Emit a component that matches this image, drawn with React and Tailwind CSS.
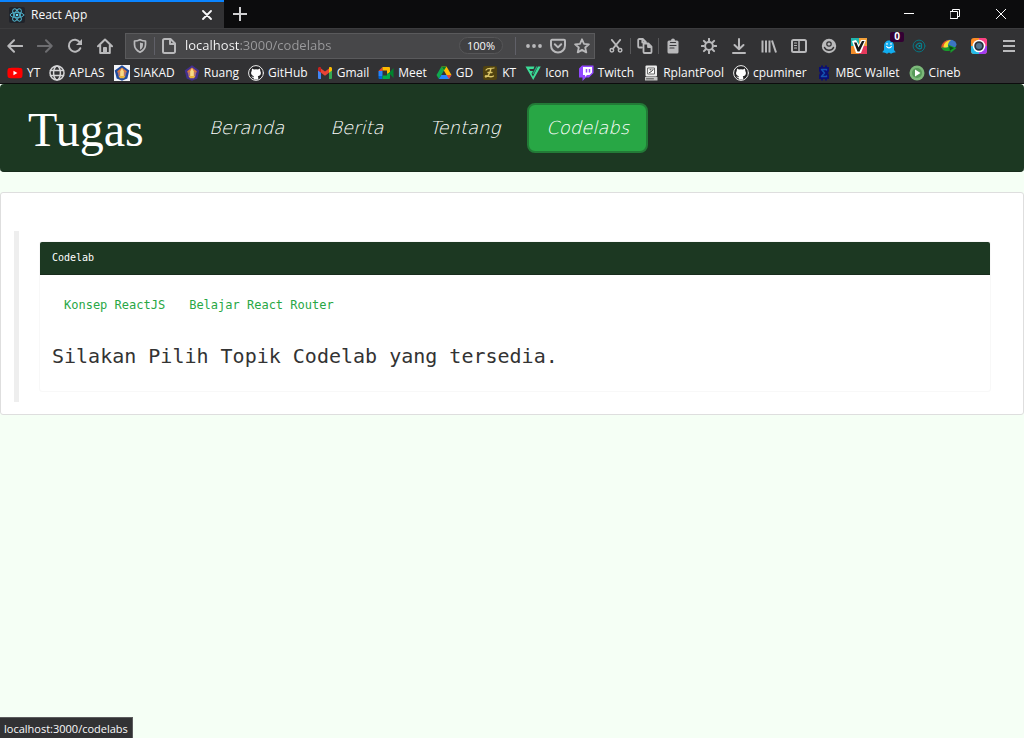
import React from "react";
import { FaGithub, FaYoutube } from "react-icons/fa";

const ui = "font-['Open_Sans','Noto_Sans',sans-serif]";

function Svg({ children, size = 16, box = 16, className = "" }) {
  return (
    <svg
      width={size}
      height={size}
      viewBox={`0 0 ${box} ${box}`}
      fill="none"
      stroke="currentColor"
      strokeWidth="2"
      strokeLinecap="round"
      strokeLinejoin="round"
      className={`shrink-0 ${className}`}
      aria-hidden="true"
    >
      {children}
    </svg>
  );
}

const ReactLogo = () => (
  <Svg>
    <rect width="16" height="16" rx="2" fill="#20232a" stroke="none" />
    <g stroke="#4fb3cc" strokeWidth="1">
      <ellipse cx="8" cy="8" rx="6.8" ry="2.7" />
      <ellipse cx="8" cy="8" rx="6.8" ry="2.7" transform="rotate(60 8 8)" />
      <ellipse cx="8" cy="8" rx="6.8" ry="2.7" transform="rotate(120 8 8)" />
    </g>
    <circle cx="8" cy="8" r="1.3" fill="#61dafb" stroke="none" />
  </Svg>
);

const Back = () => <Svg><path d="M15.200 8H1.500M7 2.300L1.300 8L7 13.700" /></Svg>;
const Forward = () => <Svg><path d="M.8 8h13.700M9 2.300L14.700 8L9 13.700" /></Svg>;
const Reload = () => (
  <Svg>
    <path d="M13.300 10.200A6 6 0 1 1 12.800 4.200" />
    <path d="M15 1v6H9z" fill="currentColor" stroke="none" />
  </Svg>
);
const Home = () => (
  <Svg>
    <path d="M1 8.200L8 1.500L15 8.200M3.200 7.500V15h9.600V7.500" />
    <path d="M6.500 14.500V9.500h3v5z" fill="currentColor" strokeWidth="1" />
  </Svg>
);
const Shield = () => (
  <Svg>
    <path d="M8 1.700C6 2.700 4.300 3 2.500 3v3.600C2.500 10.500 4.800 12.800 8 14.300c3.200-1.500 5.500-3.800 5.500-7.700V3c-1.800 0-3.500-.3-5.500-1.300z" strokeWidth="1.700" />
    <path d="M8 4.600v7.200c2-1.200 3-3 3-5.400V5.200c-1 0-2-.2-3-.6z" fill="currentColor" stroke="none" />
  </Svg>
);
const Page = () => (
  <Svg>
    <path d="M3.500 1h6L14 5.500V13.500a1.500 1.500 0 0 1-1.500 1.500h-9A1.500 1.500 0 0 1 2 13.500v-11A1.500 1.500 0 0 1 3.500 1zM9 1.500V6h4.500" />
  </Svg>
);
const Dots = () => (
  <Svg>
    <g fill="currentColor" stroke="none">
      <circle cx="2" cy="8" r="1.900" /><circle cx="8" cy="8" r="1.900" /><circle cx="14" cy="8" r="1.900" />
    </g>
  </Svg>
);
const Pocket = () => (
  <Svg><path d="M2 1.800h12a1 1 0 0 1 1 1V7.500a7 7 0 0 1-14 0V2.800a1 1 0 0 1 1-1zM4.800 6.300L8 9.400l3.200-3.100" /></Svg>
);
const Star = () => (
  <Svg><path d="M8 1.300l2 4.500 4.900.5-3.700 3.200 1.100 4.900L8 11.900l-4.300 2.500 1.100-4.900L1.100 6.300 6 5.800z" strokeWidth="1.800" /></Svg>
);
const Cut = () => (
  <Svg size={14}>
    <circle cx="3.300" cy="12.800" r="2" strokeWidth="1.700" /><circle cx="12.700" cy="12.800" r="2" strokeWidth="1.700" />
    <path d="M4.600 11L12.800 1M11.400 11L3.200 1" />
  </Svg>
);
const Copy = () => (
  <Svg>
    <path d="M5 9.500H2.200a1 1 0 0 1-1-1V2a1 1 0 0 1 1-1h3.600L9 4.200M5.300 1.500v3h2.500" strokeWidth="1.800" />
    <path d="M7.500 5.500h3.800l3.200 3.200V14a1 1 0 0 1-1 1h-6a1 1 0 0 1-1-1V6.500a1 1 0 0 1 1-1zM11 6v3h3" strokeWidth="1.800" />
  </Svg>
);
const Paste = () => (
  <Svg>
    <path d="M4 2.500h2a2 2 0 0 1 4 0h2A1.500 1.500 0 0 1 13.500 4v10a1.500 1.500 0 0 1-1.500 1.500H4A1.500 1.500 0 0 1 2.500 14V4A1.500 1.500 0 0 1 4 2.500z" fill="currentColor" stroke="none" />
    <path d="M5.500 4.500h5M5 7.500h6M5 10h4" stroke="#38383b" strokeWidth="1.200" />
  </Svg>
);
const Gear = () => (
  <Svg>
    <circle cx="8" cy="8" r="3.900" />
    <path d="M8 .8v2M8 13.200v2M.8 8h2M13.200 8h2M2.900 2.900l1.400 1.400M11.700 11.700l1.400 1.400M2.900 13.100l1.400-1.400M11.700 4.300l1.400-1.400" />
  </Svg>
);
const Download = () => <Svg><path d="M8 1v10M3.500 7L8 11.300L12.500 7M2 15h12" /></Svg>;
const Library = () => <Svg><path d="M1.500 2.500v12M5 2.500v12M8.500 2.500v12M11 2.500l4 12" strokeLinecap="butt" /></Svg>;
const Sidebar = () => (
  <Svg>
    <rect x="1" y="2" width="14" height="12" rx="1.500" />
    <path d="M8 2v12" strokeWidth="1.500" /><path d="M3.500 5h2M3.500 7.500h2M3.500 10h2" strokeWidth="1.200" />
  </Svg>
);
const Account = () => (
  <Svg>
    <circle cx="8" cy="8" r="7.200" fill="currentColor" stroke="none" />
    <circle cx="8" cy="6" r="2.800" fill="#323234" stroke="none" /><circle cx="8" cy="6" r="1.600" fill="currentColor" stroke="none" />
    <path d="M3.500 9.500c1.800 3.800 7.200 3.800 9 0" stroke="#323234" strokeWidth="1.500" />
  </Svg>
);
const VLogo = () => (
  <Svg>
    <g stroke="none">
      <path d="M0 0h8v8H0z" fill="#1fb5ad" /><path d="M8 0h8v8H8z" fill="#f2a03a" />
      <path d="M0 8h8v8H0z" fill="#f28c28" /><path d="M8 8h8v8H8z" fill="#e5395c" />
      <path d="M1 3l4-1 3 5 2-5h5L10 15H5z" fill="#fff" />
      <path d="M3 4.500h2.500l2 5L11 3h2.500L8.500 13.500h-2z" fill="#181818" />
    </g>
  </Svg>
);
const Ghost = () => (
  <Svg>
    <path d="M3 8C3 .5 13 .5 13 8v4l1.800 2.200-2.800.6-2 .9L8 14.500l-2 1.200-2-.9-2.800-.6L3 12z" fill="#12adf0" stroke="none" />
    <path d="M6 5.300v1M10 5.300v1M5.700 8.500c1 1.800 3.600 1.800 4.600 0" stroke="#fff" strokeWidth="1.200" />
  </Svg>
);
const Target = () => (
  <Svg>
    <circle cx="8" cy="8" r="5.900" stroke="#087481" strokeWidth="1" />
    <path d="M4.800 8C6.500 5 9 4.500 10.500 6v4C9 11.500 6.500 11 4.800 8z" stroke="#087f8c" strokeWidth="1.200" />
    <circle cx="8.500" cy="8" r="1" fill="#0d96a4" stroke="none" />
  </Svg>
);
const Idm = () => (
  <Svg>
    <g stroke="none">
      <ellipse cx="9" cy="6.500" rx="6.500" ry="4.700" fill="#3b75c4" />
      <path d="M.3 10C0 5 5 1.500 9.500 2 6 4 5 6 5 9.500z" fill="#e0522a" />
      <path d="M2.500 9.500C2.500 5 6 2.500 10 2 7.500 4 6.500 6 7 9.500z" fill="#f5e12f" />
      <path d="M.5 8.500C2 10.500 5 10 7.500 9L7 6.500l8.500 3.500-6 5v-2.500C5 14 .5 12.500.5 8.500z" fill="#189a2c" />
      <path d="M8 8l5 2-4 2.500z" fill="#0a4d18" />
    </g>
  </Svg>
);
const Camera = () => (
  <Svg>
    <g stroke="none">
      <rect width="16" height="16" rx="3" fill="#fc8b24" />
      <path d="M8 0h5a3 3 0 0 1 3 3v5H8z" fill="#fb3f86" /><path d="M8 8h8v5a3 3 0 0 1-3 3H8z" fill="#a23bf0" />
      <path d="M0 8h8v8H3a3 3 0 0 1-3-3z" fill="#24bce8" />
      <circle cx="8" cy="8" r="6.300" fill="#fff" />
    </g>
    <circle cx="8" cy="8" r="3.900" fill="#56758d" stroke="#28323f" strokeWidth="1.800" />
  </Svg>
);
const Menu = () => <Svg><path d="M2 3h12M2 8h12M2 13h12" strokeLinecap="butt" /></Svg>;

const Globe = () => (
  <Svg>
    <g strokeWidth="1.500" stroke="#d5d5d7">
      <circle cx="8" cy="8" r="7" /><ellipse cx="8" cy="8" rx="3.400" ry="7" /><path d="M1.500 5.500h13M1.500 10.500h13" />
    </g>
  </Svg>
);
const Crest = ({ boxed }) => (
  <Svg>
    <g stroke="none">
      {boxed && <path d="M0 0h16v16H0z" fill="#f4f4f8" />}
      <path d="M8 .3l7.300 5.200-2 8L8 15.700 2.700 13.500.7 5.500z" fill={boxed ? "#1f4b9e" : "#43308f"} />
      <path d="M8 2.500l4.800 3.700-1.800 5H5l-1.800-5z" fill="#dc7a3c" />
      <path d="M8 3l1.800 3.500V11H6.200V6.500z" fill="#f7dc86" />
      <path d="M4.500 11h7L10 13.200H6z" fill="#e8b33c" />
    </g>
    <path d="M5 7.500v3M11 7.500v3" stroke="#8b6fa8" strokeWidth="1" />
  </Svg>
);
const GitHubMark = () => (
  <Svg>
    <circle cx="8" cy="8" r="7.400" fill="#232325" stroke="#eee" strokeWidth="1" />
    <path d="M4 3.500l2 .9a8 8 0 0 1 4 0l2-.9.300 2.500c1.500 2.500.2 5-2.500 5.300.4.500.5 1 .5 3.200H5.700v-1.800c-1.500.3-2-.5-2.600-1.500 1 .2 1.400 1 2.600.5 0-.2.200-.3.400-.5C3.500 10.800 2.200 8.500 3.700 6z" fill="#fff" stroke="none" />
  </Svg>
);
const Gmail = () => (
  <Svg>
    <g stroke="none">
      <path d="M1 4l3 2.200V14H2a1 1 0 0 1-1-1z" fill="#4285f4" /><path d="M15 4l-3 2.200V14h2a1 1 0 0 0 1-1z" fill="#34a853" />
      <path d="M4 3.500l4 3 4-3v4.200l-4 3-4-3z" fill="#ea4335" />
      <path d="M1 3.500C1 2 2.800 1.600 4 2.500v5.200L1 5.500z" fill="#c5221f" /><path d="M15 3.500c0-1.500-1.800-1.900-3-1v5.200l3-2.200z" fill="#fbbc04" />
    </g>
  </Svg>
);
const Meet = () => (
  <Svg>
    <g stroke="none">
      <path d="M.5 6l4-4v4z" fill="#ea4335" /><path d="M.5 6h4v5h-4z" fill="#2684fc" /><path d="M.5 11h4v3h-3a1 1 0 0 1-1-1z" fill="#0066da" />
      <path d="M4.500 2H11a1 1 0 0 1 1 1v4.500L9 9V5.500H4.500z" fill="#ffba00" />
      <path d="M4.500 10.500H9V9l3-1.500V13a1 1 0 0 1-1 1H4.500z" fill="#00ac47" /><path d="M11 8l4.500-5v10z" fill="#00832d" />
    </g>
  </Svg>
);
const Drive = () => (
  <Svg>
    <g stroke="none">
      <path d="M5.500 1.500L.5 10l2.300 4L8 5.500z" fill="#0fa84e" /><path d="M5.500 1.500h5l5 8.500h-5z" fill="#ffba00" />
      <path d="M5.400 10h10.100L13 14H2.800z" fill="#2684fc" /><path d="M5.500 1.500h5L8 5.600z" fill="#00832d" />
      <path d="M10.500 10h5L13 14z" fill="#ea4335" />
    </g>
  </Svg>
);
const Kt = () => (
  <Svg>
    <rect x="1" y="1" width="14" height="14" rx="2" fill="#51430f" stroke="none" />
    <path d="M4 5c1.500-2.500 5-1 8-2M9 3.500C8 8 7 11 4 12c-1 0-1-1.500.5-1.200 2 .4 4 2 7 .2M6 7.500h4" stroke="#dbc668" strokeWidth="1.300" />
  </Svg>
);
const IconMark = () => (
  <Svg>
    <path d="M.5 1.500h9L8.500 4H4.200l1 2H8L6.800 8.500h-.5L8 11.500 13 1.500h2.800L8.200 15z" fill="#3ddc97" stroke="none" />
    <path d="M12 1.500L8 9" stroke="#23a377" strokeWidth="1.500" strokeLinecap="butt" />
  </Svg>
);
const TwitchMark = () => (
  <Svg>
    <path d="M4 .5L1 3.500v9h3.500V16L8 12.500h3L15.500 8V.5z" fill="#9147ff" stroke="none" />
    <path d="M5 2h9v5.500L11.500 10H9l-2 2v-2H5z" fill="#fff" stroke="none" />
    <path d="M8.500 4v3.500M11.500 4v3.500" stroke="#9147ff" strokeWidth="1.500" strokeLinecap="butt" />
  </Svg>
);
const Pool = () => (
  <Svg>
    <rect x="2.500" y=".5" width="11.500" height="11" rx="1" fill="#ececec" stroke="none" />
    <path d="M5 3h6.500v6H5z" fill="#fff" stroke="#666" strokeWidth="1" /><path d="M6.500 7.500l2-1 1.500-2M7 4.800h1" stroke="#333" strokeWidth="1" />
    <path d="M2 12h12.500v3.500H2z" fill="#c4c4c4" stroke="none" /><path d="M3.500 13.800h7" stroke="#555" strokeWidth="1" />
  </Svg>
);
const Mbc = () => (
  <Svg>
    <path d="M3 2h2V.5h2V2h2V.5h2V2h2v4l-1 2 1 2v4h-2v1.500H9V14H7v1.500H5V14H3v-4l1-2-1-2z" fill="#0c0f72" stroke="none" />
    <path d="M10.500 5V4.500h-5L8.500 8l-3 3.500h5V11" stroke="#1453b0" strokeWidth="1.500" />
  </Svg>
);
const Play = () => (
  <Svg>
    <circle cx="8" cy="8" r="7.500" fill="#7cb97a" stroke="none" /><circle cx="8" cy="8" r="5" fill="#569a59" stroke="none" />
    <path d="M6 4.500L11.500 8 6 11.500z" fill="#fff" stroke="none" />
  </Svg>
);

const bookmarks = [
  ["YT", <FaYoutube size={16} color="#ff0000" className="bg-[radial-gradient(circle,#fff_30%,transparent_32%)]" />],
  ["APLAS", <Globe />],
  ["SIAKAD", <Crest boxed />],
  ["Ruang", <Crest />],
  ["GitHub", <GitHubMark />],
  ["Gmail", <Gmail />],
  ["Meet", <Meet />],
  ["GD", <Drive />],
  ["KT", <Kt />],
  ["Icon", <IconMark />],
  ["Twitch", <TwitchMark />],
  ["RplantPool", <Pool />],
  ["cpuminer", <GitHubMark />],
  ["MBC Wallet", <Mbc />],
  ["Cineb", <Play />],
];

const extensions = [
  ["Settings", <Gear />],
  ["Downloads", <Download />],
  ["Library", <Library />],
  ["Sidebars", <Sidebar />],
  ["Account", <Account />],
  ["V extension", <VLogo />],
  ["Tracker blocker", <Ghost />, "0"],
  ["Target", <Target />],
  ["Download manager", <Idm />],
  ["Screen capture", <Camera />],
  ["Menu", <Menu />],
];

function ToolButton({ label, children, className = "w-[30px]" }) {
  return (
    <button type="button" aria-label={label} className={`relative flex h-7 shrink-0 items-center justify-center ${className}`}>
      {children}
    </button>
  );
}

function TabStrip() {
  return (
    <div className="flex h-7 items-stretch justify-between bg-[#0c0c0d]">
      <div className="flex">
        <div className="flex w-56 items-center gap-1.5 border-t-2 border-[#0a84ff] bg-[#323234] pr-2.5 pl-[9px]">
          <ReactLogo />
          <span className="grow text-[12px] text-[#f9f9fa]">React App</span>
          <button type="button" aria-label="Close tab" className="p-0.5 text-[#f9f9fa]">
            <Svg size={10} box={10}><path d="M1 1l8 8M9 1L1 9" strokeWidth="1.800" /></Svg>
          </button>
        </div>
        <button type="button" aria-label="New tab" className="flex w-8 items-center justify-center text-[#d0d0d2]">
          <Svg size={14} box={14}><path d="M7 0v14M0 7h14" strokeLinecap="butt" /></Svg>
        </button>
      </div>
      <div className="flex text-white">
        <button type="button" aria-label="Minimize" className="flex w-[46px] items-center justify-center">
          <Svg size={10} box={10}><path d="M0 4.500h10" strokeWidth="1" /></Svg>
        </button>
        <button type="button" aria-label="Restore" className="flex w-[46px] items-center justify-center">
          <Svg size={10} box={10}><path d="M.5 2.500h7v7h-7zM2.500 2.500v-2h7v7h-2" strokeWidth="1" /></Svg>
        </button>
        <button type="button" aria-label="Close window" className="flex w-[46px] items-center justify-center">
          <Svg size={10} box={10}><path d="M0 0l10 10M10 0L0 10" strokeWidth="1" /></Svg>
        </button>
      </div>
    </div>
  );
}

function Toolbar() {
  return (
    <div className="flex h-[34px] items-center border-t border-[#3c3c3e] text-[#b9b9bb]">
      <ToolButton label="Back"><Back /></ToolButton>
      <ToolButton label="Forward" className="w-[30px] text-[#6d6d70]"><Forward /></ToolButton>
      <ToolButton label="Reload"><Reload /></ToolButton>
      <ToolButton label="Home"><Home /></ToolButton>
      <div className="ml-[5px] flex h-[26px] min-w-0 grow items-center border border-[#5a5a5c] bg-[#474749] pr-1 pl-1.5">
        <Shield />
        <span className="mx-1.5 h-[18px] w-px bg-[#606068]" />
        <Page />
        <input
          aria-label="Address"
          defaultValue="localhost:3000/codelabs"
          className="ml-2 min-w-0 grow bg-[linear-gradient(to_right,#f9f9fa_55px,#9b9b9d_55px)] bg-clip-text text-[13px] text-transparent outline-none"
        />
        <button type="button" className="h-[17px] w-11 rounded-full border border-[#565658] bg-[#404042] text-[11px] leading-[15px] text-[#f9f9fa]">100%</button>
        <span className="mr-2.5 ml-3 h-[18px] w-px bg-[#606068]" />
        <div className="flex gap-2">
          <button type="button" aria-label="Page actions"><Dots /></button>
          <button type="button" aria-label="Save to Pocket"><Pocket /></button>
          <button type="button" aria-label="Bookmark this page"><Star /></button>
        </div>
      </div>
      <div className="mr-2 ml-[7px] flex items-center">
        <ToolButton label="Cut" className="w-7"><Cut /></ToolButton>
        <span className="h-4 w-px bg-[#58585a]" />
        <ToolButton label="Copy" className="w-[27px]"><Copy /></ToolButton>
        <span className="h-4 w-px bg-[#58585a]" />
        <ToolButton label="Paste" className="w-[27px]"><Paste /></ToolButton>
      </div>
      {extensions.map(([label, icon, badge]) => (
        <ToolButton key={label} label={label}>
          {icon}
          {badge && (
            <span className="absolute top-0 right-0 flex h-2.5 w-3.5 items-center justify-center rounded-xs bg-[#330033] text-[10px] font-bold text-white">{badge}</span>
          )}
        </ToolButton>
      ))}
    </div>
  );
}

function Bookmarks() {
  return (
    <div className="flex h-[22px] items-center gap-[9px] overflow-hidden border-b border-[#0c0c0d] pl-[7px]">
      {bookmarks.map(([label, icon]) => (
        <a key={label} href="#" className="flex shrink-0 items-center gap-1 text-[12px] leading-4 whitespace-nowrap text-[#f9f9fa]">
          {icon}
          {label}
        </a>
      ))}
    </div>
  );
}

function SiteNav() {
  const links = ["Beranda", "Berita", "Tentang", "Codelabs"];
  return (
    <nav className="flex h-22 items-center rounded-[4px] border-b border-[#182c1c] bg-[#1c3822] pl-7 text-white">
      <a href="#" className="w-[162px] pt-1 font-['Liberation_Serif',serif] text-[48px] leading-[56px]">Tugas</a>
      <ul className="flex gap-2">
        {links.map((name) => (
          <li key={name}>
            <a
              href="#"
              className={`flex h-[50px] items-center rounded-[8px] border-2 px-[17px] font-['DejaVu_Sans_Light','DejaVu_Sans_ExtraLight','DejaVu_Sans',sans-serif] text-[18px] font-extralight italic ${
                name === "Codelabs" ? "border-[#237a37] bg-[#28a745]" : "border-transparent"
              }`}
            >
              {name}
            </a>
          </li>
        ))}
      </ul>
    </nav>
  );
}

export default function App() {
  return (
    <div className={`min-h-screen bg-[#f5fff5] ${ui}`}>
      <header className="bg-[#323234]">
        <TabStrip />
        <Toolbar />
        <Bookmarks />
      </header>
      <SiteNav />
      <main className="mt-5 rounded-[3px] border border-[#dedede] bg-white pt-[38px] pr-8 pb-3 pl-[13px] font-['DejaVu_Sans_Mono','Liberation_Mono',monospace]">
        <div className="border-l-[5px] border-[#eeeeee] py-2.5 pl-5">
          <section className="rounded-[3px] border border-[#f8f8f8]">
            <h2 className="rounded-t-[2px] border-b border-[#182c1c] bg-[#1c3822] px-3 py-2 text-[10px] leading-4 text-white">Codelab</h2>
            <div className="px-3 pt-3 pb-[22px]">
              <div className="flex text-[12px] leading-4 text-[#28a745]">
                <a href="#" className="px-3 py-2.5">Konsep ReactJS</a>
                <a href="#" className="px-3 py-2.5">Belajar React Router</a>
              </div>
              <p className="pt-5 text-[20px] leading-[26px] text-[#333333]">Silakan Pilih Topik Codelab yang tersedia.</p>
            </div>
          </section>
        </div>
      </main>
      <div className="fixed bottom-0 left-0 h-[21px] border-t border-r border-[#5c5c5e] bg-[#323234] px-1 text-[11px] leading-[21px] text-[#f9f9fa]">
        localhost:3000/codelabs
      </div>
    </div>
  );
}
